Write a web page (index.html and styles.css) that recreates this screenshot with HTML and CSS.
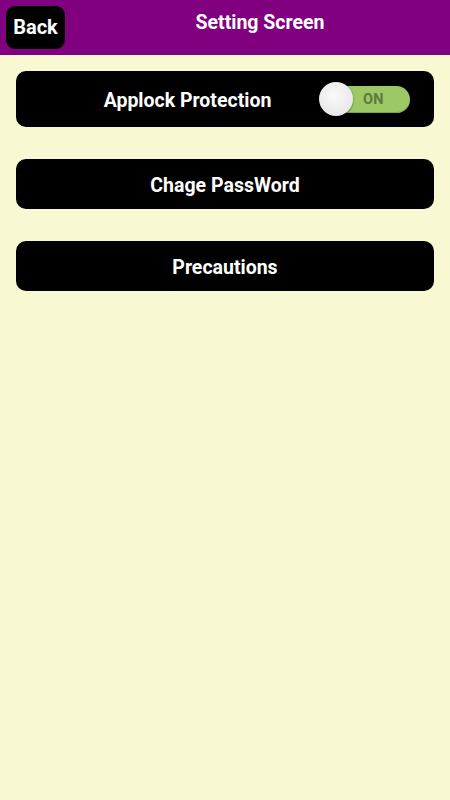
FILE: index.html
```html
<!DOCTYPE html>
<html lang="en">
<head>
    <meta charset="UTF-8">
    <meta name="viewport" content="width=device-width, initial-scale=1.0">
    <title>Setting Screen</title>
    <link rel="stylesheet" href="styles.css">
</head>
<body>

<div class="topbar">
    <button class="back-btn">Back</button>
    <div class="title">Setting Screen</div>
</div>

<div class="content">
    <div class="row row-toggle">
        <span class="row-label">Applock Protection</span>
        <div class="switch">
            <span class="switch-text">ON</span>
            <span class="knob"></span>
        </div>
    </div>

    <button class="row">Chage PassWord</button>

    <button class="row">Precautions</button>
</div>

</body>
</html>
```

FILE: styles.css
```css
html, body { height: 100%; }
body {
    margin: 0;
    background-color: #f8f8d2;
    font-family: Roboto, "Liberation Sans", sans-serif;
    font-weight: bold;
    color: #fff;
}
.topbar {
    height: 55px;
    background-color: #800080;
    display: flex;
    align-items: center;
    padding: 0 6px;
    box-sizing: border-box;
}
.back-btn {
    width: 59px;
    height: 43px;
    background-color: #000;
    color: #fff;
    border: none;
    border-radius: 9px;
    font-family: inherit;
    font-weight: bold;
    font-size: 20px;
    padding: 0;
    margin-top: -1px;
}
.title {
    flex: 1;
    text-align: center;
    font-size: 19.5px;
    margin-top: -10px;
    padding-left: 11px;
}
.content {
    padding: 16px 16px 0;
    display: flex;
    flex-direction: column;
}
.row {
    background-color: #000;
    color: #fff;
    border: none;
    border-radius: 10px;
    height: 50px;
    font-family: inherit;
    font-weight: bold;
    font-size: 19.5px;
    padding: 2px 0 0;
    margin-bottom: 32px;
    width: 100%;
}
.row-toggle {
    height: 56px;
    display: flex;
    align-items: center;
    justify-content: center;
    position: relative;
    margin-bottom: 32px;
    box-sizing: border-box;
}
.row-label { margin-left: -75px; }
.switch {
    position: absolute;
    left: 304px;
    top: 15px;
    width: 90px;
    height: 27px;
    border-radius: 14px;
    background-color: #9cc866;
    box-shadow: inset 0 -1px 0 #7ea54e;
}
.switch-text {
    position: absolute;
    left: 43px;
    top: 5px;
    font-size: 14.5px;
    letter-spacing: 0.3px;
    color: #5b7a3c;
}
.knob {
    position: absolute;
    left: -1px;
    top: -4px;
    width: 34px;
    height: 34px;
    border-radius: 50%;
    background: radial-gradient(circle at 45% 40%, #fafafa 0%, #e8e8e8 70%, #cfcfcf 100%);
    box-shadow: 0 1px 2px rgba(0,0,0,0.5);
}
```
